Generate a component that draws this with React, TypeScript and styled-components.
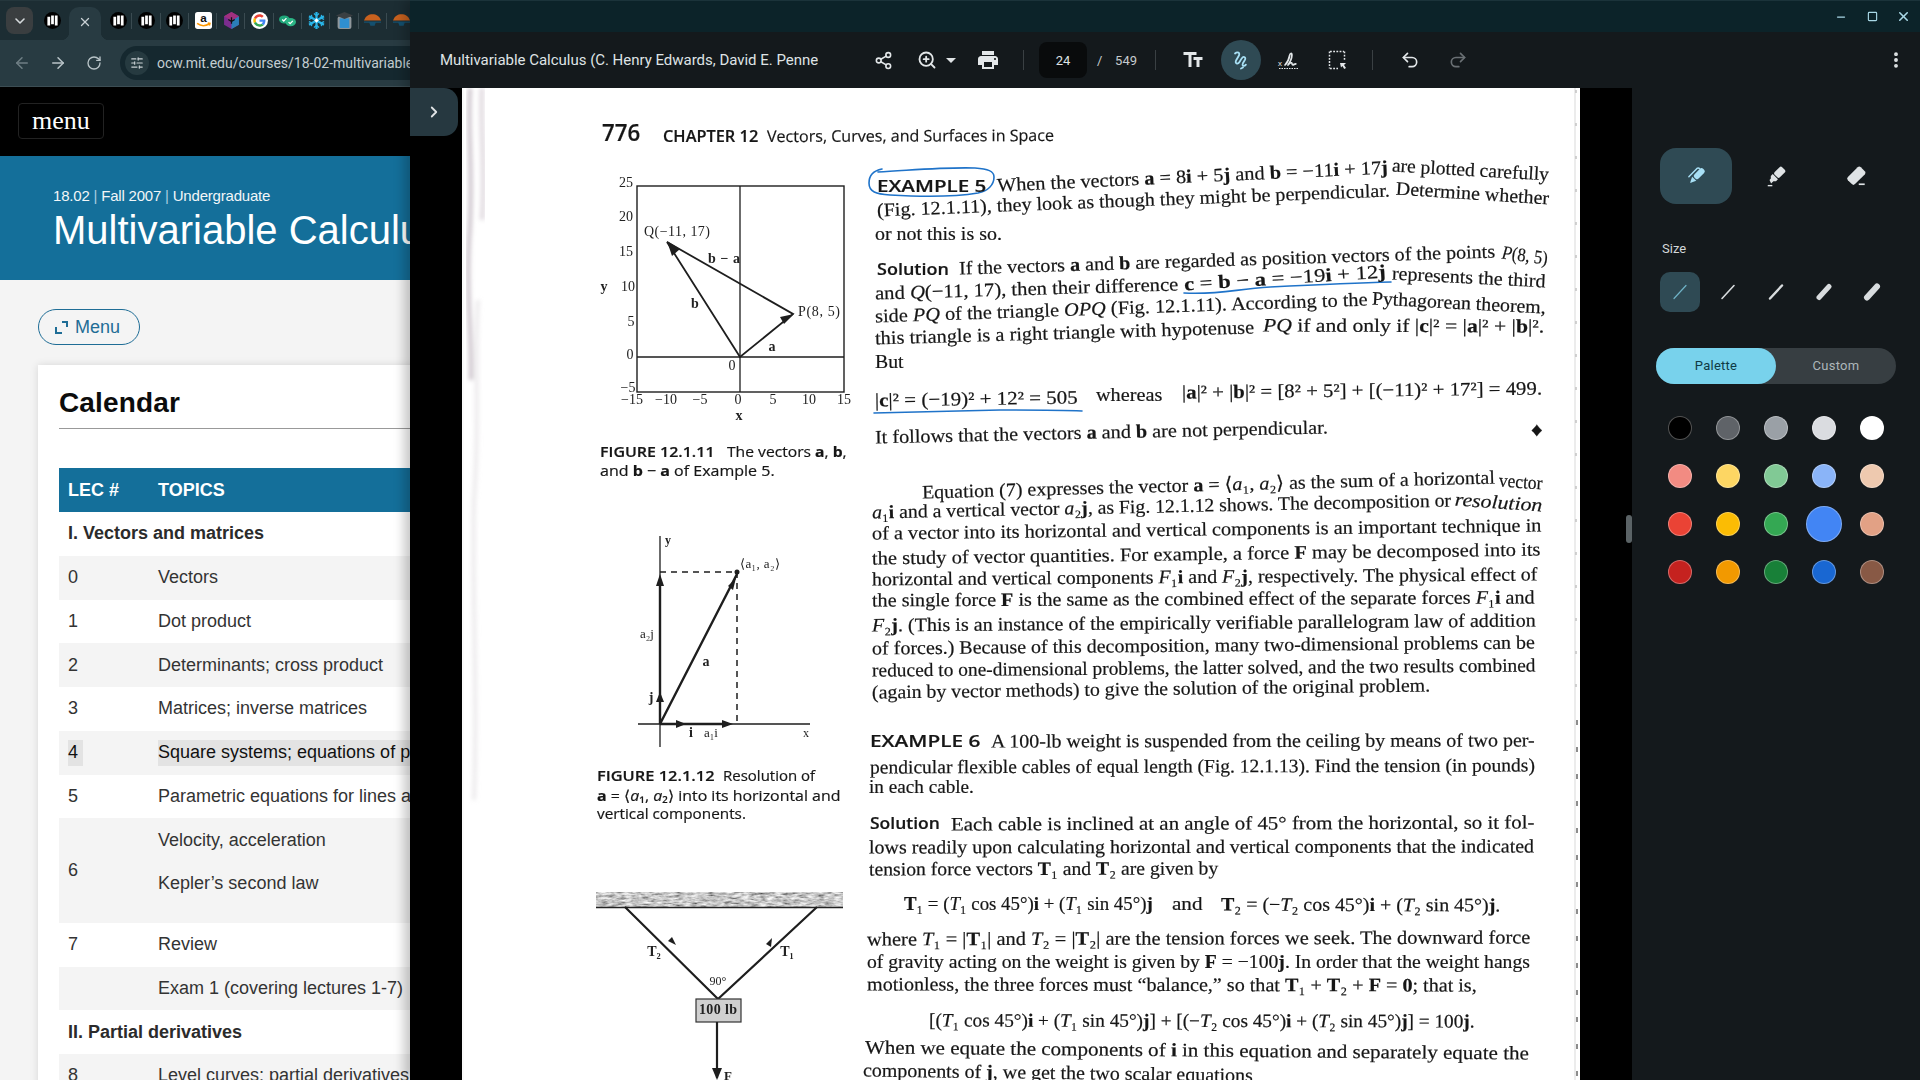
import React, { useLayoutEffect, useRef } from "react";
import styled, { createGlobalStyle } from "styled-components";
import { ArrowLeft, ArrowRight, ChevronDown, ChevronRight, MoreVertical, Redo2, RotateCw, Share2, Undo2, X, ZoomIn, Minus, Square, SlidersHorizontal } from "lucide-react";

const Global = createGlobalStyle`
  html, body { margin: 0; padding: 0; background: #000; }
  body { font-family: Roboto, "Liberation Sans", sans-serif; }
  * { box-sizing: border-box; }
`;

const Screen = styled.div`
  width: 1920px;
  height: 1080px;
  display: flex;
  overflow: hidden;
`;

/* ---------- browser column ---------- */
const BrowserColumn = styled.div`
  width: 410px;
  flex: none;
  overflow: hidden;
  display: flex;
  flex-direction: column;
  background: #f4f4f4;
`;
const TabStrip = styled.div`
  height: 40px;
  flex: none;
  display: flex;
  align-items: center;
  padding: 0 0 0 6px;
  background: #1c2d33;
  border-top: 1px solid #24363c;
`;
const TabMenu = styled.div`
  width: 27px;
  height: 27px;
  flex: none;
  border-radius: 8px;
  background: #3a3e40;
  color: #d5d9db;
  display: flex;
  align-items: center;
  justify-content: center;
`;
const PinnedFirst = styled.div`
  width: 28px;
  margin-left: 5px;
  flex: none;
  display: flex;
  justify-content: center;
`;
const ActiveTab = styled.div`
  position: relative;
  width: 32px;
  height: 33px;
  margin: 6px 3px 0 3px;
  align-self: flex-start;
  flex: none;
  background: #283b42;
  border-radius: 10px 10px 0 0;
  display: flex;
  align-items: center;
  justify-content: center;
  color: #c9d1d4;
  padding-bottom: 4px;
  &::before, &::after {
    content: "";
    position: absolute;
    bottom: 0;
    width: 8px;
    height: 8px;
  }
  &::before { left: -8px; background: radial-gradient(circle at 0 0, transparent 8px, #283b42 8.5px); }
  &::after { right: -8px; background: radial-gradient(circle at 100% 0, transparent 8px, #283b42 8.5px); }
`;
const TabSlot = styled.div<{ $last?: boolean }>`
  position: relative;
  width: 28.3px;
  flex: none;
  height: 100%;
  display: flex;
  align-items: center;
  justify-content: center;
  &::after {
    content: "";
    position: absolute;
    right: 0;
    top: 12px;
    height: 16px;
    width: 1px;
    background: ${(p) => (p.$last ? "transparent" : "#3a4b51")};
  }
`;
const AddressRow = styled.div`
  height: 47px;
  flex: none;
  display: flex;
  align-items: center;
  padding-left: 4px;
  background: #283b42;
  border-bottom: 1px solid #3c4d53;
`;
const NavButton = styled.div<{ $dim?: boolean }>`
  width: 36px;
  height: 36px;
  flex: none;
  display: flex;
  align-items: center;
  justify-content: center;
  color: ${(p) => (p.$dim ? "#6f7f85" : "#b9c4c8")};
`;
const AddressPill = styled.div`
  margin-left: 8px;
  width: 420px;
  height: 34px;
  flex: none;
  border-radius: 17px;
  background: #15282f;
  display: flex;
  align-items: center;
  padding-left: 5px;
`;
const SiteInfo = styled.div`
  width: 24px;
  height: 24px;
  border-radius: 50%;
  background: #263a40;
  color: #c9d1d4;
  display: flex;
  align-items: center;
  justify-content: center;
  flex: none;
`;
const UrlText = styled.span`
  margin-left: 8px;
  font: 400 14px Roboto, sans-serif;
  color: #c3cdd1;
  white-space: nowrap;
`;
const SiteNav = styled.div`
  height: 69px;
  flex: none;
  background: #000;
  padding: 16px 0 0 18px;
`;
const SiteMenuButton = styled.div`
  width: 86px;
  height: 36px;
  border: 1px solid #222;
  border-radius: 4px;
  color: #fff;
  font: 400 26px "Liberation Serif", serif;
  display: flex;
  align-items: center;
  justify-content: center;
`;
const Hero = styled.div`
  height: 124px;
  flex: none;
  background: #146f9a;
  color: #fff;
  padding: 30px 0 0 53px;
  white-space: nowrap;
`;
const HeroMeta = styled.div`
  font: 400 15px/20px "Liberation Sans", sans-serif;
  letter-spacing: -0.2px;
  color: #f2f6f8;
  span { color: #a9cde0; }
`;
const HeroTitle = styled.div`
  font: 400 40px/48px "Liberation Sans", sans-serif;
`;
const Content = styled.div`
  flex: 1;
  padding: 29px 0 0 38px;
  background: #f4f4f4;
`;
const OutlineButton = styled.div`
  width: 102px;
  height: 36px;
  border: 1px solid #1f6d96;
  border-radius: 18px;
  display: flex;
  align-items: center;
  gap: 7px;
  padding-left: 16px;
  color: #1f6d96;
  font: 400 18px "Liberation Sans", sans-serif;
`;
const Card = styled.div`
  width: 1400px;
  margin-top: 20px;
  padding: 20px 0 0 21px;
  background: #fff;
  box-shadow: 0 0 8px rgba(0, 0, 0, 0.12);
`;
const CardTitle = styled.h2`
  margin: 0;
  font: 700 28px/36px "Liberation Sans", sans-serif;
  letter-spacing: 0.15px;
  color: #0c0c0c;
`;
const Rule = styled.div`
  margin-top: 7px;
  height: 1px;
  background: #999;
`;
const Table = styled.div`
  margin-top: 39px;
  font: 400 18px "Liberation Sans", sans-serif;
  color: #333;
  white-space: nowrap;
`;
const HeaderRow = styled.div`
  height: 44px;
  background: #146f9a;
  color: #fff;
  font-weight: 700;
  display: grid;
  grid-template-columns: 99px 1fr;
  align-items: center;
`;
const Row = styled.div<{ $shade?: boolean; $tall?: boolean }>`
  height: ${(p) => (p.$tall ? "104.6px" : "43.75px")};
  background: ${(p) => (p.$shade ? "#f4f4f4" : "#fff")};
  display: grid;
  grid-template-columns: 99px 1fr;
  align-items: center;
`;
const Section = styled.div`
  height: 43.75px;
  background: #fff;
  display: flex;
  align-items: center;
  padding-left: 9px;
  font-weight: 700;
  color: #2b2b2b;
`;
const Num = styled.div`
  padding-left: 9px;
`;
const Topic = styled.div<{ $stack?: boolean }>`
  ${(p) => (p.$stack ? "align-self: start;" : "")}
`;
const TopicLine = styled.div`
  height: 40px;
  display: flex;
  align-items: center;
  &:first-child { height: 45px; }
`;
const Selected = styled.span<{ $pad?: boolean }>`
  display: inline-block;
  vertical-align: top;
  height: 26px;
  line-height: 25px;
  background: #e3e3e3;
  color: #111;
  padding-right: ${(p) => (p.$pad ? "5px" : "0")};
`;

/* ---------- PDF viewer ---------- */
const Viewer = styled.div`
  width: 1510px;
  flex: none;
  display: flex;
  flex-direction: column;
  position: relative;
  z-index: 2;
  box-shadow: -6px 0 10px rgba(0, 0, 0, 0.22);
`;
const TitleBar = styled.div`
  height: 32px;
  flex: none;
  background: #0c2329;
  border-top: 1px solid #1b333a;
  display: flex;
  align-items: center;
  justify-content: flex-end;
  gap: 15px;
  padding-right: 9px;
  color: #a9d8e6;
`;
const WindowButton = styled.div`
  width: 16px;
  height: 16px;
  display: flex;
  align-items: center;
  justify-content: center;
`;
const Toolbar = styled.div`
  height: 56px;
  flex: none;
  background: #14191c;
  display: flex;
  align-items: center;
  padding: 0 4px 0 30px;
  color: #dfe3e5;
`;
const DocTitle = styled.div`
  width: 378px;
  flex: none;
  overflow: hidden;
  white-space: nowrap;
  font: 400 15px Roboto, sans-serif;
  letter-spacing: -0.02px;
  color: #dfe3e5;
  margin-right: 45px;
`;
const ToolSlot = styled.div<{ $active?: boolean; $dim?: boolean; $w?: number }>`
  width: ${(p) => p.$w ?? 40}px;
  height: 40px;
  flex: none;
  border-radius: 20px;
  display: flex;
  align-items: center;
  justify-content: center;
  background: ${(p) => (p.$active ? "#2f4a54" : "transparent")};
  color: ${(p) => (p.$active ? "#a8e0f5" : p.$dim ? "#6a7074" : "#e3e7e9")};
`;
const ZoomSlot = styled(ToolSlot)`
  gap: 9px;
  justify-content: flex-start;
  padding-left: 14px;
`;
const Caret = styled.span`
  width: 0;
  height: 0;
  border-left: 5px solid transparent;
  border-right: 5px solid transparent;
  border-top: 5px solid #dfe3e5;
`;
const Sep = styled.div`
  width: 1px;
  height: 20px;
  background: #3a4043;
  margin: 0 15px;
  flex: none;
`;
const PageBox = styled.div`
  width: 48px;
  height: 36px;
  flex: none;
  background: #090b0c;
  border-radius: 8px;
  display: flex;
  align-items: center;
  justify-content: center;
  font: 400 13px Roboto, sans-serif;
  color: #dfe3e5;
`;
const PageTotal = styled.div`
  width: 40px;
  flex: none;
  margin-left: 10px;
  margin-right: 3px;
  display: flex;
  justify-content: space-between;
  font: 400 13px Roboto, sans-serif;
  color: #c6cbce;
`;
const ToolGroup = styled.div`
  display: flex;
  gap: 8px;
  flex: none;
  margin-left: 2px;
`;
const Kebab = styled(ToolSlot)`
  margin-left: auto;
`;
const ViewerBody = styled.div`
  flex: 1;
  min-height: 0;
  display: flex;
  background: #000;
  position: relative;
`;
const LeftGutter = styled.div`
  width: 52px;
  flex: none;
`;
const SideToggle = styled.div`
  width: 48px;
  height: 48px;
  background: #263840;
  border-radius: 0 14px 14px 0;
  color: #dfe3e5;
  display: flex;
  align-items: center;
  justify-content: center;
`;
const Sheet = styled.div`
  position: relative;
  width: 1118px;
  flex: none;
  overflow: hidden;
  background: #fff;
`;
const SheetInk = styled.div`
  position: absolute;
  inset: 0;
  filter: blur(0.45px);
`;
const Drawing = styled.svg`
  position: absolute;
  left: 0;
  top: 0;
  width: 1118px;
  height: 992px;
`;
const RightGutter = styled.div`
  width: 52px;
  flex: none;
`;
const ScrollThumb = styled.div`
  position: absolute;
  left: 1216px;
  top: 427px;
  width: 6px;
  height: 28px;
  border-radius: 3px;
  background: #5b6366;
`;
const Panel = styled.div`
  width: 288px;
  flex: none;
  background: #14191c;
  padding: 60px 24px 0 28px;
`;
const PenTools = styled.div`
  display: flex;
  gap: 8px;
`;
const PenTool = styled.div<{ $active?: boolean }>`
  width: 72px;
  height: 56px;
  border-radius: 16px;
  display: flex;
  align-items: center;
  justify-content: center;
  background: ${(p) => (p.$active ? "#2f4a54" : "transparent")};
  color: ${(p) => (p.$active ? "#a8e0f5" : "#dfe3e5")};
`;
const SizeLabel = styled.div`
  margin-top: 36px;
  margin-left: 2px;
  font: 400 13px/18px Roboto, sans-serif;
  color: #d3d7d9;
`;
const Sizes = styled.div`
  margin-top: 14px;
  display: flex;
  gap: 8px;
`;
const SizeOption = styled.div<{ $active?: boolean }>`
  width: 40px;
  height: 40px;
  border-radius: 10px;
  display: flex;
  align-items: center;
  justify-content: center;
  background: ${(p) => (p.$active ? "#2f4a54" : "transparent")};
  color: ${(p) => (p.$active ? "#6fb3c7" : "#d8dcde")};
`;
const Segment = styled.div`
  margin: 36px 0 0 -4px;
  width: 240px;
  height: 36px;
  border-radius: 18px;
  background: #373e42;
  display: flex;
`;
const SegmentItem = styled.div<{ $on?: boolean }>`
  width: 120px;
  height: 36px;
  border-radius: 18px;
  padding-bottom: 1px;
  background: ${(p) => (p.$on ? "#78d2ec" : "transparent")};
  color: ${(p) => (p.$on ? "#0f3a45" : "#adb6ba")};
  font: 400 13px Roboto, sans-serif;
  letter-spacing: 0.25px;
  display: flex;
  align-items: center;
  justify-content: center;
`;
const Palette = styled.div`
  margin-top: 20px;
  display: grid;
  grid-template-columns: repeat(5, 40px);
  grid-auto-rows: 48px;
  column-gap: 8px;
`;
const SwatchCell = styled.div`
  display: flex;
  align-items: center;
  justify-content: center;
`;
const Swatch = styled.div<{ $c: string; $big?: boolean }>`
  width: ${(p) => (p.$big ? 36 : 24)}px;
  height: ${(p) => (p.$big ? 36 : 24)}px;
  border-radius: 50%;
  background: ${(p) => p.$c};
  border: 1px solid rgba(255, 255, 255, 0.32);
`;

const SCAN_WEIGHT: Record<string, number> = { sans: 600, caption: 400 };
const ScanSpan = styled.span<{ $kind?: string; $size?: number }>`
  position: absolute;
  white-space: nowrap;
  transform-origin: 0 50%;
  color: #161616;
  -webkit-text-stroke: 0.2px #161616;
  font-family: ${(p) => (p.$kind ? `"Open Sans", "Liberation Sans", sans-serif` : `"Liberation Serif", "DejaVu Serif", serif`)};
  font-weight: ${(p) => SCAN_WEIGHT[p.$kind ?? ""] ?? 400};
  font-size: ${(p) => p.$size ?? 19}px;
  line-height: 1;
  b { font-weight: 700; }
`;

const OX = 462;
const OY = 88;

type SegProps = { x1: number; y1: number; x2: number; y2?: number; kind?: string; size?: number; children: React.ReactNode };

/* A line of the scanned page: placed on the sheet and stretched to the width it has in the scan. */
function Seg({ x1, y1, x2, y2, kind, size, children }: SegProps) {
  const ref = useRef<HTMLSpanElement>(null);
  const ye = y2 ?? y1;
  useLayoutEffect(() => {
    const el = ref.current;
    if (!el) return;
    const len = Math.hypot(x2 - x1, ye - y1);
    const k = len / el.offsetWidth;
    const a = (Math.atan2(ye - y1, x2 - x1) * 180) / Math.PI;
    el.style.transform = `translateY(-50%) rotate(${a}deg) scaleX(${k})`;
  }, [x1, x2, y1, ye]);
  return (
    <ScanSpan ref={ref} $kind={kind} $size={size} style={{ left: x1 - OX, top: y1 - OY }}>
      {children}
    </ScanSpan>
  );
}

function ScanText() {
  return (
    <>
      <Seg x1={602} y1={132} x2={640} kind="sans" size={24}>776</Seg>
      <Seg x1={663} y1={136} x2={758} kind="sans" size={16}>CHAPTER 12</Seg>
      <Seg x1={767} y1={136} x2={1054} y2={135} kind="caption" size={16}>Vectors, Curves, and Surfaces in Space</Seg>

      <Seg x1={877} y1={185} x2={986} kind="sans" size={17}>EXAMPLE 5</Seg>
      <Seg x1={997} y1={185} x2={1388} y2={167}>When the vectors <b>a</b> = 8<b>i</b> + 5<b>j</b> and <b>b</b> = −11<b>i</b> + 17<b>j</b></Seg>
      <Seg x1={1392} y1={165} x2={1549} y2={174}>are plotted carefully</Seg>
      <Seg x1={877} y1={210} x2={1390} y2={190}>(Fig. 12.1.11), they look as though they might be perpendicular.</Seg>
      <Seg x1={1396} y1={188} x2={1549} y2={198}>Determine whether</Seg>
      <Seg x1={875} y1={233} x2={1002}>or not this is so.</Seg>

      <Seg x1={877} y1={268} x2={949} kind="sans" size={17}>Solution</Seg>
      <Seg x1={959} y1={268} x2={1495} y2={251}>If the vectors <b>a</b> and <b>b</b> are regarded as position vectors of the points</Seg>
      <Seg x1={1502} y1={252} x2={1548} y2={258}><i>P</i>(8, 5)</Seg>
      <Seg x1={875} y1={293} x2={1178} y2={284}>and <i>Q</i>(−11, 17), then their difference</Seg>
      <Seg x1={1184} y1={284} x2={1386} y2={271}><b>c</b> = <b>b</b> − <b>a</b> = −19<b>i</b> + 12<b>j</b></Seg>
      <Seg x1={1392} y1={273} x2={1546} y2={281}>represents the third</Seg>
      <Seg x1={875} y1={316} x2={1368} y2={299}>side <i>PQ</i> of the triangle <i>OPQ</i> (Fig. 12.1.11). According to the</Seg>
      <Seg x1={1372} y1={298} x2={1546} y2={307}>Pythagorean theorem,</Seg>
      <Seg x1={875} y1={338} x2={1254} y2={327}>this triangle is a right triangle with hypotenuse</Seg>
      <Seg x1={1263} y1={325} x2={1544} y2={326}><i>PQ</i> if and only if |<b>c</b>|² = |<b>a</b>|² + |<b>b</b>|².</Seg>
      <Seg x1={875} y1={361} x2={903}>But</Seg>
      <Seg x1={875} y1={400} x2={1078} y2={397}>|<b>c</b>|² = (−19)² + 12² = 505</Seg>
      <Seg x1={1096} y1={394} x2={1162}>whereas</Seg>
      <Seg x1={1182} y1={392} x2={1542} y2={388}>|<b>a</b>|² + |<b>b</b>|² = [8² + 5²] + [(−11)² + 17²] = 499.</Seg>
      <Seg x1={875} y1={437} x2={1328} y2={427}>It follows that the vectors <b>a</b> and <b>b</b> are not perpendicular.</Seg>
      <Seg x1={1531} y1={429} x2={1543}>♦</Seg>

      <Seg x1={922} y1={492} x2={1495} y2={477}>Equation (7) expresses the vector <b>a</b> = ⟨<i>a</i>₁, <i>a</i>₂⟩ as the sum of a horizontal</Seg>
      <Seg x1={1499} y1={480} x2={1542} y2={483}>vector</Seg>
      <Seg x1={872} y1={512} x2={1451} y2={500}><i>a</i>₁<b>i</b> and a vertical vector <i>a</i>₂<b>j</b>, as Fig. 12.1.12 shows. The decomposition or</Seg>
      <Seg x1={1455} y1={499} x2={1542} y2={505}><i>resolution</i></Seg>
      <Seg x1={872} y1={533} x2={1541} y2={525}>of a vector into its horizontal and vertical components is an important technique in</Seg>
      <Seg x1={872} y1={558} x2={1541} y2={549}>the study of vector quantities. For example, a force <b>F</b> may be decomposed into its</Seg>
      <Seg x1={872} y1={579} x2={1537} y2={574}>horizontal and vertical components <i>F</i>₁<b>i</b> and <i>F</i>₂<b>j</b>, respectively. The physical effect of</Seg>
      <Seg x1={872} y1={600} x2={1535} y2={597}>the single force <b>F</b> is the same as the combined effect of the separate forces <i>F</i>₁<b>i</b> and</Seg>
      <Seg x1={872} y1={625} x2={1536} y2={620}><i>F</i>₂<b>j</b>. (This is an instance of the empirically verifiable parallelogram law of addition</Seg>
      <Seg x1={872} y1={648} x2={1535} y2={642}>of forces.) Because of this decomposition, many two-dimensional problems can be</Seg>
      <Seg x1={872} y1={670} x2={1536} y2={665}>reduced to one-dimensional problems, the latter solved, and the two results combined</Seg>
      <Seg x1={872} y1={692} x2={1430} y2={685}>(again by vector methods) to give the solution of the original problem.</Seg>

      <Seg x1={870} y1={740} x2={980} kind="sans" size={17}>EXAMPLE 6</Seg>
      <Seg x1={991} y1={741} x2={1535} y2={740}>A 100-lb weight is suspended from the ceiling by means of two per-</Seg>
      <Seg x1={870} y1={767} x2={1535} y2={765}>pendicular flexible cables of equal length (Fig. 12.1.13). Find the tension (in pounds)</Seg>
      <Seg x1={869} y1={786} x2={974}>in each cable.</Seg>
      <Seg x1={870} y1={822} x2={940} kind="sans" size={17}>Solution</Seg>
      <Seg x1={951} y1={824} x2={1534} y2={822}>Each cable is inclined at an angle of 45° from the horizontal, so it fol-</Seg>
      <Seg x1={869} y1={847} x2={1534} y2={846}>lows readily upon calculating horizontal and vertical components that the indicated</Seg>
      <Seg x1={869} y1={869} x2={1218} y2={868}>tension force vectors <b>T</b>₁ and <b>T</b>₂ are given by</Seg>
      <Seg x1={904} y1={903} x2={1153}><b>T</b>₁ = (<i>T</i>₁ cos 45°)<b>i</b> + (<i>T</i>₁ sin 45°)<b>j</b></Seg>
      <Seg x1={1172} y1={903} x2={1202}>and</Seg>
      <Seg x1={1221} y1={904} x2={1500} y2={905}><b>T</b>₂ = (−<i>T</i>₂ cos 45°)<b>i</b> + (<i>T</i>₂ sin 45°)<b>j</b>.</Seg>
      <Seg x1={867} y1={939} x2={1530} y2={937}>where <i>T</i>₁ = |<b>T</b>₁| and <i>T</i>₂ = |<b>T</b>₂| are the tension forces we seek. The downward force</Seg>
      <Seg x1={867} y1={961} x2={1530} y2={961}>of gravity acting on the weight is given by <b>F</b> = −100<b>j</b>. In order that the weight hangs</Seg>
      <Seg x1={867} y1={984} x2={1477} y2={985}>motionless, the three forces must “balance,” so that <b>T</b>₁ + <b>T</b>₂ + <b>F</b> = <b>0</b>; that is,</Seg>
      <Seg x1={929} y1={1020} x2={1475} y2={1021}>[(<i>T</i>₁ cos 45°)<b>i</b> + (<i>T</i>₁ sin 45°)<b>j</b>] + [(−<i>T</i>₂ cos 45°)<b>i</b> + (<i>T</i>₂ sin 45°)<b>j</b>] = 100<b>j</b>.</Seg>
      <Seg x1={865} y1={1047} x2={1529} y2={1053}>When we equate the components of <b>i</b> in this equation and separately equate the</Seg>
      <Seg x1={863} y1={1070} x2={1253} y2={1075}>components of <b>j</b>, we get the two scalar equations</Seg>

      <Seg x1={600} y1={451} x2={715} kind="sans" size={15}>FIGURE 12.1.11</Seg>
      <Seg x1={727} y1={451} x2={847} kind="caption" size={15}>The vectors <b>a</b>, <b>b</b>,</Seg>
      <Seg x1={600} y1={470} x2={775} kind="caption" size={15}>and <b>b</b> − <b>a</b> of Example 5.</Seg>
      <Seg x1={597} y1={775} x2={715} kind="sans" size={15}>FIGURE 12.1.12</Seg>
      <Seg x1={723} y1={775} x2={815} kind="caption" size={15}>Resolution of</Seg>
      <Seg x1={597} y1={795} x2={840} kind="caption" size={15}><b>a</b> = ⟨<i>a</i>₁, <i>a</i>₂⟩ into its horizontal and</Seg>
      <Seg x1={597} y1={813} x2={746} kind="caption" size={15}>vertical components.</Seg>
    </>
  );
}

const FigLabel = styled.text<{ $size?: number; $bold?: boolean }>`
  font-family: "Liberation Serif", serif;
  font-size: ${(p) => p.$size ?? 14}px;
  font-weight: ${(p) => (p.$bold ? 700 : 400)};
  fill: #222;
  dominant-baseline: middle;
  text-anchor: middle;
`;

function Figures() {
  const vecStroke = { stroke: "#1e1e1e", fill: "none" } as const;
  return (
    <Drawing viewBox={`${OX} ${OY} 1118 992`}>
      <defs>
        <filter id="smudge"><feGaussianBlur stdDeviation="2.2" /></filter>
        <filter id="grain" x="0" y="0" width="100%" height="100%">
          <feTurbulence type="fractalNoise" baseFrequency="0.12 0.45" numOctaves="3" seed="4" />
          <feColorMatrix values="1.3 0 0 0 -0.08  1.3 0 0 0 -0.08  1.3 0 0 0 -0.08  0 0 0 0 1" />
          <feComposite in2="SourceGraphic" operator="in" />
        </filter>
      </defs>

      {/* worn left margin and right edge of the scan */}
      <g filter="url(#smudge)" fill="none">
        <path d="M470 88 C467 130 474 180 469 240 C466 300 472 330 471 380" stroke="#a89aa6" strokeWidth="4" opacity="0.6" />
        <path d="M482 88 C480 130 486 170 482 220" stroke="#c8bcc6" strokeWidth="5" opacity="0.5" />
        <path d="M478 300 C474 360 480 420 474 500 C472 600 478 700 474 800" stroke="#d5d0d4" strokeWidth="4" opacity="0.45" />
      </g>
      <rect x="462.5" y="88" width="1" height="992" fill="#f5f5f5" />
      <path d="M1575 88 V1080" stroke="#d9d9d9" strokeWidth="1" />
      <path d="M1577 720 V1080" stroke="#8d8d8d" strokeWidth="2" strokeDasharray="5 22" />
      <path d="M1576 90 V700" stroke="#c4c4c4" strokeWidth="1.5" strokeDasharray="3 30" />

      {/* Fig 12.1.11 */}
      <rect x="637" y="186" width="207" height="206" {...vecStroke} strokeWidth="1.4" />
      <path d="M740 186 V392 M637 357 H844" {...vecStroke} strokeWidth="1.3" />
      <path d="M740 357 L667 242 L793 314 Z" {...vecStroke} strokeWidth="1.8" />
      <polygon points="667,241 680,249 672,256" fill="#1e1e1e" />
      <polygon points="794,314 780,317 784,324" fill="#1e1e1e" />
      {[["25", 626, 184], ["20", 626, 218], ["15", 626, 253], ["10", 628, 288], ["5", 631, 323], ["0", 630, 356], ["−5", 628, 389], ["y", 604, 288], ["−15", 632, 401], ["−10", 666, 401], ["−5", 700, 401], ["0", 738, 401], ["5", 773, 401], ["10", 809, 401], ["15", 844, 401], ["0", 732, 367]].map(([t, x, y], i) => (
        <FigLabel key={i} x={x} y={y} $bold={t === "y"}>{t}</FigLabel>
      ))}
      <FigLabel x={739} y={417} $bold>x</FigLabel>
      <FigLabel x={677} y={233} textLength={66}>Q(−11, 17)</FigLabel>
      <FigLabel x={724} y={260} $bold textLength={32}>b − a</FigLabel>
      <FigLabel x={695} y={305} $bold>b</FigLabel>
      <FigLabel x={819} y={313} textLength={42}>P(8, 5)</FigLabel>
      <FigLabel x={772} y={348} $bold>a</FigLabel>

      {/* Fig 12.1.12 */}
      <path d="M660 536 V747 M638 724 H810" {...vecStroke} strokeWidth="1.3" />
      <path d="M660 572 H737 V724" {...vecStroke} strokeWidth="1.5" strokeDasharray="6 5" />
      <path d="M660 724 L737 574 M660 724 V582 M660 724 H728" {...vecStroke} strokeWidth="2.4" />
      <circle cx="737" cy="572" r="2.5" fill="#1e1e1e" />
      <polygon points="660,574 656,586 664,586" fill="#1e1e1e" />
      <polygon points="660,692 656,702 664,702" fill="#1e1e1e" />
      <polygon points="733,724 722,720 722,728" fill="#1e1e1e" />
      <polygon points="686,724 676,720 676,728" fill="#1e1e1e" />
      <polygon points="736,578 728,586 733,590" fill="#1e1e1e" />
      <FigLabel x={668} y={541} $bold $size={12}>y</FigLabel>
      <FigLabel x={760} y={565} $size={13} textLength={40}>⟨a₁, a₂⟩</FigLabel>
      <FigLabel x={647} y={635} $size={13}>a₂j</FigLabel>
      <FigLabel x={706} y={663} $bold>a</FigLabel>
      <FigLabel x={651} y={699} $bold>j</FigLabel>
      <FigLabel x={691} y={734} $bold>i</FigLabel>
      <FigLabel x={711} y={734} $size={13}>a₁i</FigLabel>
      <FigLabel x={806} y={734} $size={12}>x</FigLabel>

      {/* Fig 12.1.13 */}
      <rect x="596" y="892" width="247" height="15" fill="#a8a8a8" filter="url(#grain)" />
      <path d="M596 907.5 H843" stroke="#222" strokeWidth="1.5" />
      <path d="M625 907 L718 999 L817 907" {...vecStroke} strokeWidth="2.2" />
      <polygon points="676,945 668,941 672,937" fill="#1e1e1e" />
      <polygon points="772,938 766,944 771,947" fill="#1e1e1e" />
      <rect x="696" y="999" width="45" height="23" fill="#d0d0d0" stroke="#333" strokeWidth="1.2" />
      <path d="M717 1022 V1078" {...vecStroke} strokeWidth="2.2" />
      <polygon points="717,1080 712,1068 722,1068" fill="#1e1e1e" />
      <FigLabel x={654} y={953} $bold $size={14}>T₂</FigLabel>
      <FigLabel x={787} y={953} $bold $size={14}>T₁</FigLabel>
      <FigLabel x={718} y={982} $size={12}>90°</FigLabel>
      <FigLabel x={718} y={1011} $bold $size={14} textLength={38}>100 lb</FigLabel>
      <FigLabel x={728} y={1077} $bold $size={13}>F</FigLabel>

      {/* blue ink */}
      <g fill="none" stroke="#1f73c9" strokeWidth="1.6" strokeLinecap="round">
        <path d="M882 169 C872 171 869 176 869 183 C869 192 876 194 890 195 C925 197 960 196 978 193 C988 191 994 185 994 177 C994 171 988 169 975 168 C945 167 915 170 878 172" />
        <path d="M1184 293 C1220 295 1235 289 1270 287 C1310 285 1350 283 1391 282" />
        <path d="M874 413 C905 412 950 411 1000 410 C1030 410 1060 410 1082 411" />
      </g>
    </Drawing>
  );
}

/* ---------- favicons ---------- */
const Fav = styled.svg`
  width: 17px;
  height: 17px;
  display: block;
  flex: none;
`;
const MFav = () => (
  <Fav viewBox="0 0 16 16">
    <circle cx="8" cy="8" r="8" fill="#000" />
    <path d="M3.2 4.400h2.600v8.200H3.200zM6.700 3.400h2.600v8.200H6.700zM10.200 3.400h2.600v9.200h-2.600z" fill="#fff" />
  </Fav>
);
const AmazonLetter = styled.text`
  font: 700 11px "Liberation Sans", sans-serif;
  fill: #111;
  text-anchor: middle;
`;
const AmazonFav = () => (
  <Fav viewBox="0 0 16 16">
    <rect width="16" height="16" rx="2.5" fill="#fff" />
    <AmazonLetter x="8" y="9.5">a</AmazonLetter>
    <path d="M2 10.800c3.500 2.600 8 2.600 11.600.3M12 10.400l2 .3-.5 2" fill="none" stroke="#f90" strokeWidth="1.5" />
  </Fav>
);
const CubeFav = () => (
  <Fav viewBox="0 0 16 16">
    <path d="M8 0l7 4v8l-7 4-7-4V4z" fill="#7b2d8f" />
    <path d="M8 8l7-4v8l-7 4z" fill="#2a7fb8" />
    <path d="M8 0l7 4-7 4-7-4z" fill="#a0307e" />
    <path d="M8 5v6M5 7l3 2 3-2" stroke="#111" strokeWidth="1.2" fill="none" />
  </Fav>
);
const GoogleFav = () => (
  <Fav viewBox="0 0 48 48">
    <circle cx="24" cy="24" r="24" fill="#fff" />
    <g transform="translate(6.5 6.5) scale(.73)">
      <path fill="#EA4335" d="M24 9.500c3.500 0 6.700 1.200 9.200 3.600l6.900-6.900C35.900 2.400 30.400 0 24 0 14.600 0 6.500 5.400 2.600 13.200l8 6.200C12.500 13.700 17.800 9.500 24 9.500z" />
      <path fill="#4285F4" d="M46.900 24.500c0-1.600-.1-3.100-.4-4.500H24v9h12.900c-.6 3-2.200 5.500-4.700 7.200l7.700 6C44.400 37.700 46.900 31.700 46.900 24.500z" />
      <path fill="#FBBC05" d="M10.500 28.600c-.5-1.400-.8-3-.8-4.600s.3-3.200.8-4.600l-8-6.200C.9 16.500 0 20.100 0 24s.9 7.500 2.600 10.800l7.900-6.200z" />
      <path fill="#34A853" d="M24 48c6.500 0 11.900-2.100 15.900-5.800l-7.700-6c-2.200 1.400-4.900 2.300-8.200 2.300-6.200 0-11.500-4.200-13.400-9.900l-8 6.200C6.500 42.600 14.600 48 24 48z" />
    </g>
  </Fav>
);
const ChecksFav = () => (
  <Fav viewBox="0 0 16 16">
    <ellipse cx="5" cy="7" rx="5" ry="3.8" fill="#1fa67a" />
    <ellipse cx="11" cy="9.500" rx="5" ry="3.8" fill="#2bb585" />
    <path d="M3 7l1.500 1.500L7 5.800M9 9.500l1.500 1.500L13 8.300" stroke="#fff" strokeWidth="1.2" fill="none" />
  </Fav>
);
const SnowFav = () => (
  <Fav viewBox="0 0 16 16">
    <g stroke="#29b5e8" strokeWidth="2.1" strokeLinecap="butt" fill="none">
      <path d="M8 0v16M1 4l14 8M15 4L1 12" />
      <path d="M5.600 1.500L8 3.500l2.400-2M5.600 14.500L8 12.500l2.400 2M.8 7l3-1.200-.6-3M15.200 7l-3-1.200.6-3M.8 9l3 1.200-.6 3M15.200 9l-3 1.200.6 3" strokeWidth="1.2" />
    </g>
    <rect x="6.500" y="6.500" width="3" height="3" fill="#fff" transform="rotate(45 8 8)" />
  </Fav>
);
const SchoolFav = () => (
  <Fav viewBox="0 0 16 16">
    <rect x="1.500" y="4" width="13" height="12" rx="2" fill="#8f979b" />
    <rect x="3.500" y="6" width="9" height="9" fill="#2f8fd0" />
    <path d="M0 3.200L8 0l8 3.200L8 6.500z" fill="#3a3f42" />
  </Fav>
);
const OcwFav = () => (
  <Fav viewBox="0 0 16 16">
    <path d="M0 8C1.500 3.500 4.500 2 8 2s6.500 1.500 8 6z" fill="#c8611e" />
    <path d="M0 9h16v1H11l-1 3H6L5 10H0z" fill="#14506f" />
  </Fav>
);

/* ---------- hand drawn tool icons ---------- */
const InkIcon = () => (
  <svg width="24" height="24" viewBox="0 0 24 24" fill="none" stroke="currentColor" strokeWidth="1.8" strokeLinecap="round" strokeLinejoin="round">
    <path d="M6 5.500c2.500-2.200 5.500-.8 3.800 2.200L7.200 12.200c-1.800 3.500 1.600 4.500 3.300 1.800l2.200-3.600c1.900-2.800 4.900-1 3 1.900l-1.800 3c-1.300 2.700 1.300 3.500 3 1.300" />
    <path d="M12 20.500l2-1" />
  </svg>
);
const SignLabel = styled.text`
  font: 400 8px "Liberation Sans", sans-serif;
  fill: currentColor;
`;
const SignIcon = () => (
  <svg width="24" height="24" viewBox="0 0 24 24" fill="none" stroke="currentColor">
    <SignLabel x="1" y="17.500" stroke="none">x</SignLabel>
    <path d="M8 17c2-2 4-6 4.500-9 .4-3 2.500-3.500 2.400-.8-.1 3.200-2.500 7.800-3.900 9.800 1-1.200 2.500-2.500 3.500-2.200.8.300.3 2 1.300 2 .9 0 1.700-.8 3-1" strokeWidth="1.7" strokeLinecap="round" strokeLinejoin="round" />
    <path d="M2 20.500h20" strokeWidth="1.2" strokeDasharray="1.500 1" />
  </svg>
);
const SelectIcon = () => (
  <svg width="24" height="24" viewBox="0 0 24 24" fill="none" stroke="currentColor">
    <path d="M5 3.500h14M5 20.500h8M4.500 3.500v17M19.500 3.500v9" strokeWidth="1.500" strokeDasharray="1.800 1.400" />
    <path d="M15 15h6l-2 2 2 3-1.800 1-1.800-3-1.400 1.600z" fill="currentColor" stroke="none" />
  </svg>
);
const PenIcon = () => (
  <svg width="22" height="22" viewBox="0 0 24 24" fill="currentColor">
    <g transform="rotate(45 12 12)">
      <rect x="9.500" y="1" width="6.500" height="13.500" rx="2.500" />
      <path d="M9.500 15.500H16L12.800 22z" />
      <path d="M7 5.500v12.500" stroke="currentColor" strokeWidth="1.600" fill="none" strokeLinecap="round" />
      <path d="M7 5.500c0-1.500 1-2 2.500-2" stroke="currentColor" strokeWidth="1.600" fill="none" />
    </g>
  </svg>
);
const MarkerIcon = () => (
  <svg width="22" height="22" viewBox="0 0 24 24" fill="currentColor">
    <g transform="rotate(45 12 12)">
      <rect x="8" y="0.500" width="8" height="11.500" rx="2" />
      <path d="M8 13h8v3l-2 2v3.500l-4-1.500v-2l-2-2z" />
    </g>
    <path d="M3 22.500h5" stroke="currentColor" strokeWidth="1.500" />
  </svg>
);
const EraserIcon = () => (
  <svg width="22" height="22" viewBox="0 0 24 24" fill="currentColor">
    <g transform="rotate(45 12 12)">
      <rect x="6.500" y="1.500" width="11" height="20" rx="2.500" />
    </g>
    <path d="M15 21h6.500" stroke="currentColor" strokeWidth="1.800" />
  </svg>
);
const SizeStroke = ({ w }: { w: number }) => (
  <svg width="18" height="18" viewBox="0 0 18 18">
    <path d={w > 3 ? "M4 14.500L14 3.500" : "M3 15.500L15 2.500"} stroke="currentColor" strokeWidth={w} strokeLinecap="round" />
  </svg>
);
const ExpandMark = () => (
  <svg width="13" height="13" viewBox="0 0 13 13" fill="none" stroke="currentColor" strokeWidth="2">
    <path d="M1 6v6h6M7 1h5v5" />
  </svg>
);
const TextSizeIcon = () => (
  <svg width="24" height="24" viewBox="0 0 24 24" fill="currentColor">
    <path d="M2.500 4v3h5v12h3V7h5V4h-13zm19 5h-9v3h3v7h3v-7h3V9z" />
  </svg>
);
const PrintIcon = () => (
  <svg width="24" height="24" viewBox="0 0 24 24" fill="currentColor">
    <path d="M19 8H5c-1.660 0-3 1.340-3 3v6h4v4h12v-4h4v-6c0-1.660-1.340-3-3-3zm-3 11H8v-5h8v5zm3-7c-.550 0-1-.450-1-1s.450-1 1-1 1 .450 1 1-.450 1-1 1zm-1-9H6v4h12V3z" />
  </svg>
);

const SWATCHES = [
  "#000000", "#5f6368", "#9aa0a6", "#dadce0", "#ffffff",
  "#f28b82", "#fdd663", "#81c995", "#8ab4f8", "#eec9af",
  "#ea4335", "#fbbc04", "#34a853", "#4285f4", "#e2a185",
  "#c5221f", "#f29900", "#188038", "#1967d2", "#885945",
];

const LECTURES: { n: string; t: string }[] = [
  { n: "0", t: "Vectors" },
  { n: "1", t: "Dot product" },
  { n: "2", t: "Determinants; cross product" },
  { n: "3", t: "Matrices; inverse matrices" },
];

export default function App() {
  return (
    <Screen>
      <Global />
      <BrowserColumn>
        <TabStrip>
          <TabMenu><ChevronDown size={16} strokeWidth={2.4} /></TabMenu>
          <PinnedFirst><MFav /></PinnedFirst>
          <ActiveTab><X size={14} strokeWidth={2.2} /></ActiveTab>
          <TabSlot><MFav /></TabSlot>
          <TabSlot><MFav /></TabSlot>
          <TabSlot><MFav /></TabSlot>
          <TabSlot><AmazonFav /></TabSlot>
          <TabSlot><CubeFav /></TabSlot>
          <TabSlot><GoogleFav /></TabSlot>
          <TabSlot><ChecksFav /></TabSlot>
          <TabSlot><SnowFav /></TabSlot>
          <TabSlot><SchoolFav /></TabSlot>
          <TabSlot><OcwFav /></TabSlot>
          <TabSlot $last><OcwFav /></TabSlot>
        </TabStrip>
        <AddressRow>
          <NavButton $dim><ArrowLeft size={18} /></NavButton>
          <NavButton><ArrowRight size={18} /></NavButton>
          <NavButton><RotateCw size={16} /></NavButton>
          <AddressPill>
            <SiteInfo><SlidersHorizontal size={14} /></SiteInfo>
            <UrlText>ocw.mit.edu/courses/18-02-multivariable-calculus-fall-2007/</UrlText>
          </AddressPill>
        </AddressRow>
        <SiteNav><SiteMenuButton>menu</SiteMenuButton></SiteNav>
        <Hero>
          <HeroMeta>18.02 <span>|</span> Fall 2007 <span>|</span> Undergraduate</HeroMeta>
          <HeroTitle>Multivariable Calculus</HeroTitle>
        </Hero>
        <Content>
          <OutlineButton><ExpandMark /> Menu</OutlineButton>
          <Card>
            <CardTitle>Calendar</CardTitle>
            <Rule />
            <Table>
              <HeaderRow>
                <Num>LEC #</Num>
                <Topic>TOPICS</Topic>
              </HeaderRow>
              <Section>I. Vectors and matrices</Section>
              {LECTURES.map((l, i) => (
                <Row key={l.n} $shade={i % 2 === 0}>
                  <Num>{l.n}</Num>
                  <Topic>{l.t}</Topic>
                </Row>
              ))}
              <Row $shade>
                <Num><Selected $pad>4</Selected></Num>
                <Topic><Selected>Square systems; equations of planes</Selected></Topic>
              </Row>
              <Row>
                <Num>5</Num>
                <Topic>Parametric equations for lines and curves</Topic>
              </Row>
              <Row $shade $tall>
                <Num>6</Num>
                <Topic $stack>
                  <TopicLine>Velocity, acceleration</TopicLine>
                  <TopicLine>Kepler’s second law</TopicLine>
                </Topic>
              </Row>
              <Row>
                <Num>7</Num>
                <Topic>Review</Topic>
              </Row>
              <Row $shade>
                <Num />
                <Topic>Exam 1 (covering lectures 1-7)</Topic>
              </Row>
              <Section>II. Partial derivatives</Section>
              <Row $shade>
                <Num>8</Num>
                <Topic>Level curves; partial derivatives; tangent plane approximation</Topic>
              </Row>
            </Table>
          </Card>
        </Content>
      </BrowserColumn>

      <Viewer>
        <TitleBar>
          <WindowButton><Minus size={12} strokeWidth={2.5} /></WindowButton>
          <WindowButton><Square size={11} strokeWidth={2.5} /></WindowButton>
          <WindowButton><X size={15} strokeWidth={2.5} /></WindowButton>
        </TitleBar>
        <Toolbar>
          <DocTitle>Multivariable Calculus (C. Henry Edwards, David E. Penney) (z-lib.org).pdf</DocTitle>
          <ToolSlot><Share2 size={19} strokeWidth={2} /></ToolSlot>
          <ZoomSlot $w={65}><ZoomIn size={20} strokeWidth={2.2} /><Caret /></ZoomSlot>
          <ToolSlot><PrintIcon /></ToolSlot>
          <Sep />
          <PageBox>24</PageBox>
          <PageTotal><span>/</span><span>549</span></PageTotal>
          <Sep />
          <ToolGroup>
            <ToolSlot><TextSizeIcon /></ToolSlot>
            <ToolSlot $active><InkIcon /></ToolSlot>
            <ToolSlot><SignIcon /></ToolSlot>
            <ToolSlot><SelectIcon /></ToolSlot>
          </ToolGroup>
          <Sep />
          <ToolGroup>
            <ToolSlot><Undo2 size={20} strokeWidth={2} /></ToolSlot>
            <ToolSlot $dim><Redo2 size={20} strokeWidth={2} /></ToolSlot>
          </ToolGroup>
          <Kebab><MoreVertical size={20} strokeWidth={2.6} /></Kebab>
        </Toolbar>
        <ViewerBody>
          <LeftGutter>
            <SideToggle><ChevronRight size={18} strokeWidth={2.4} /></SideToggle>
          </LeftGutter>
          <Sheet>
            <SheetInk>
              <Figures />
              <ScanText />
            </SheetInk>
          </Sheet>
          <RightGutter />
          <ScrollThumb />
          <Panel>
            <PenTools>
              <PenTool $active><PenIcon /></PenTool>
              <PenTool><MarkerIcon /></PenTool>
              <PenTool><EraserIcon /></PenTool>
            </PenTools>
            <SizeLabel>Size</SizeLabel>
            <Sizes>
              <SizeOption $active><SizeStroke w={1.2} /></SizeOption>
              <SizeOption><SizeStroke w={1.6} /></SizeOption>
              <SizeOption><SizeStroke w={2.4} /></SizeOption>
              <SizeOption><SizeStroke w={5} /></SizeOption>
              <SizeOption><SizeStroke w={6} /></SizeOption>
            </Sizes>
            <Segment>
              <SegmentItem $on>Palette</SegmentItem>
              <SegmentItem>Custom</SegmentItem>
            </Segment>
            <Palette>
              {SWATCHES.map((c, i) => (
                <SwatchCell key={i}><Swatch $c={c} $big={i === 13} /></SwatchCell>
              ))}
            </Palette>
          </Panel>
        </ViewerBody>
      </Viewer>
    </Screen>
  );
}
